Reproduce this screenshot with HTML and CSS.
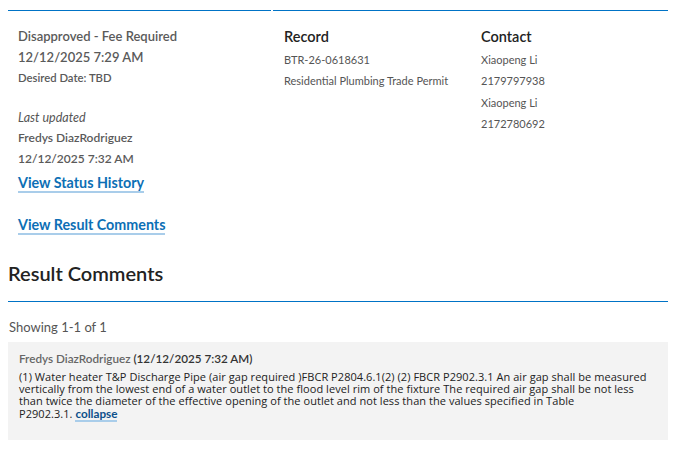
FILE: index.html
```html
<!DOCTYPE html>
<html>
<head>
<meta charset="utf-8">
<link rel="stylesheet" href="styles.css">
</head>
<body>
<div class="page">
  <div class="summary">
    <div class="status-block">
      <div class="status">Disapproved - Fee Required</div>
      <div class="status-date">12/12/2025 7:29 AM</div>
      <div class="desired">Desired Date: TBD</div>
      <div class="updated-label">Last updated</div>
      <div class="updated-by">Fredys DiazRodriguez</div>
      <div class="updated-date">12/12/2025 7:32 AM</div>
      <a class="link status-link" href="#">View Status History</a>
      <a class="link comments-link" href="#">View Result Comments</a>
    </div>
    <div class="info-block">
      <div class="info-col record-col">
        <div class="info-title">Record</div>
        <div class="info-item">BTR-26-0618631</div>
        <div class="info-item">Residential Plumbing Trade Permit</div>
      </div>
      <div class="info-col contact-col">
        <div class="info-title">Contact</div>
        <div class="info-item">Xiaopeng Li</div>
        <div class="info-item">2179797938</div>
        <div class="info-item">Xiaopeng Li</div>
        <div class="info-item">2172780692</div>
      </div>
    </div>
  </div>
  <h2 class="section-title">Result Comments</h2>
  <div class="showing">Showing 1-1 of 1</div>
  <div class="comment">
    <div class="comment-head"><span class="author">Fredys DiazRodriguez</span> (12/12/2025 7:32 AM)</div>
    <div class="comment-body">(1) Water heater T&amp;P Discharge Pipe (air gap required )FBCR P2804.6.1(2) (2) FBCR P2902.3.1 An air gap shall be measured<br>vertically from the lowest end of a water outlet to the flood level rim of the fixture The required air gap shall be not less<br>than twice the diameter of the effective opening of the outlet and not less than the values specified in Table<br>P2902.3.1. <a class="collapse" href="#">collapse</a></div>
  </div>
</div>
</body>
</html>
```

FILE: styles.css
```css
html, body {
  margin: 0;
  padding: 0;
  background: #ffffff;
}
body {
  padding: 8px;
  font-family: Lato, "Open Sans", sans-serif;
  color: #555555;
}
.page {
  width: 660px;
}
.summary {
  display: flex;
  gap: 2px;
  margin-top: 2px;
}
.status-block {
  width: 263px;
  border-top: 1px solid #0073c6;
  padding: 18px 10px 0 10px;
  box-sizing: border-box;
  display: flex;
  flex-direction: column;
  align-items: flex-start;
}
.status {
  font-size: 13px;
  font-weight: 600;
  line-height: 14px;
  color: #5a5a5a;
}
.status-date {
  font-size: 13px;
  font-weight: 600;
  line-height: 14px;
  margin-top: 7px;
  color: #5a5a5a;
}
.desired {
  font-size: 11.3px;
  font-weight: 600;
  line-height: 14px;
  margin-top: 7px;
  color: #5a5a5a;
}
.updated-label {
  font-size: 12.5px;
  font-style: italic;
  line-height: 14px;
  margin-top: 26px;
}
.updated-by,
.updated-date {
  font-size: 12px;
  font-weight: 600;
  line-height: 14px;
  color: #5a5a5a;
}
.updated-by {
  margin-top: 5.5px;
}
.updated-date {
  margin-top: 7px;
}
.link {
  font-size: 14.3px;
  font-weight: bold;
  color: #0c6fb5;
  text-decoration: none;
  line-height: 16px;
  border-bottom: 2px solid #a9cdea;
}
.status-link {
  margin-top: 9px;
}
.comments-link {
  margin-top: 24px;
}
.info-block {
  flex: 1;
  border-top: 1px solid #0073c6;
  display: flex;
  padding: 18px 0 0 11px;
}
.record-col {
  width: 197px;
}
.info-title {
  font-size: 14.5px;
  font-weight: 600;
  color: #222222;
  line-height: 16px;
}
.info-item {
  font-size: 11px;
  line-height: 14px;
  margin-top: 7.5px;
}
.section-title {
  margin: 27px 0 0 0;
  font-size: 20px;
  font-weight: 600;
  color: #222222;
  line-height: 22px;
  padding-bottom: 17px;
  border-bottom: 1px solid #0073c6;
}
.showing {
  font-size: 13px;
  line-height: 14px;
  margin-top: 18px;
  margin-left: 1px;
}
.comment {
  margin-top: 8px;
  background: #f3f3f3;
  padding: 9px 4px 20px 11px;
  box-sizing: border-box;
}
.comment-head {
  font-size: 11.7px;
  font-weight: 600;
  line-height: 14px;
  color: #333333;
}
.author {
  color: #666666;
}
.comment-body {
  margin-top: 6px;
  font-family: "Open Sans", sans-serif;
  font-size: 11px;
  letter-spacing: 0.05px;
  line-height: 12px;
  color: #222222;
}
.collapse {
  font-family: Lato, sans-serif;
  font-size: 11.7px;
  font-weight: bold;
  letter-spacing: 0;
  line-height: 12px;
  color: #0c4f8a;
  text-decoration: none;
  border-bottom: 2px solid #a9cdea;
}
```
